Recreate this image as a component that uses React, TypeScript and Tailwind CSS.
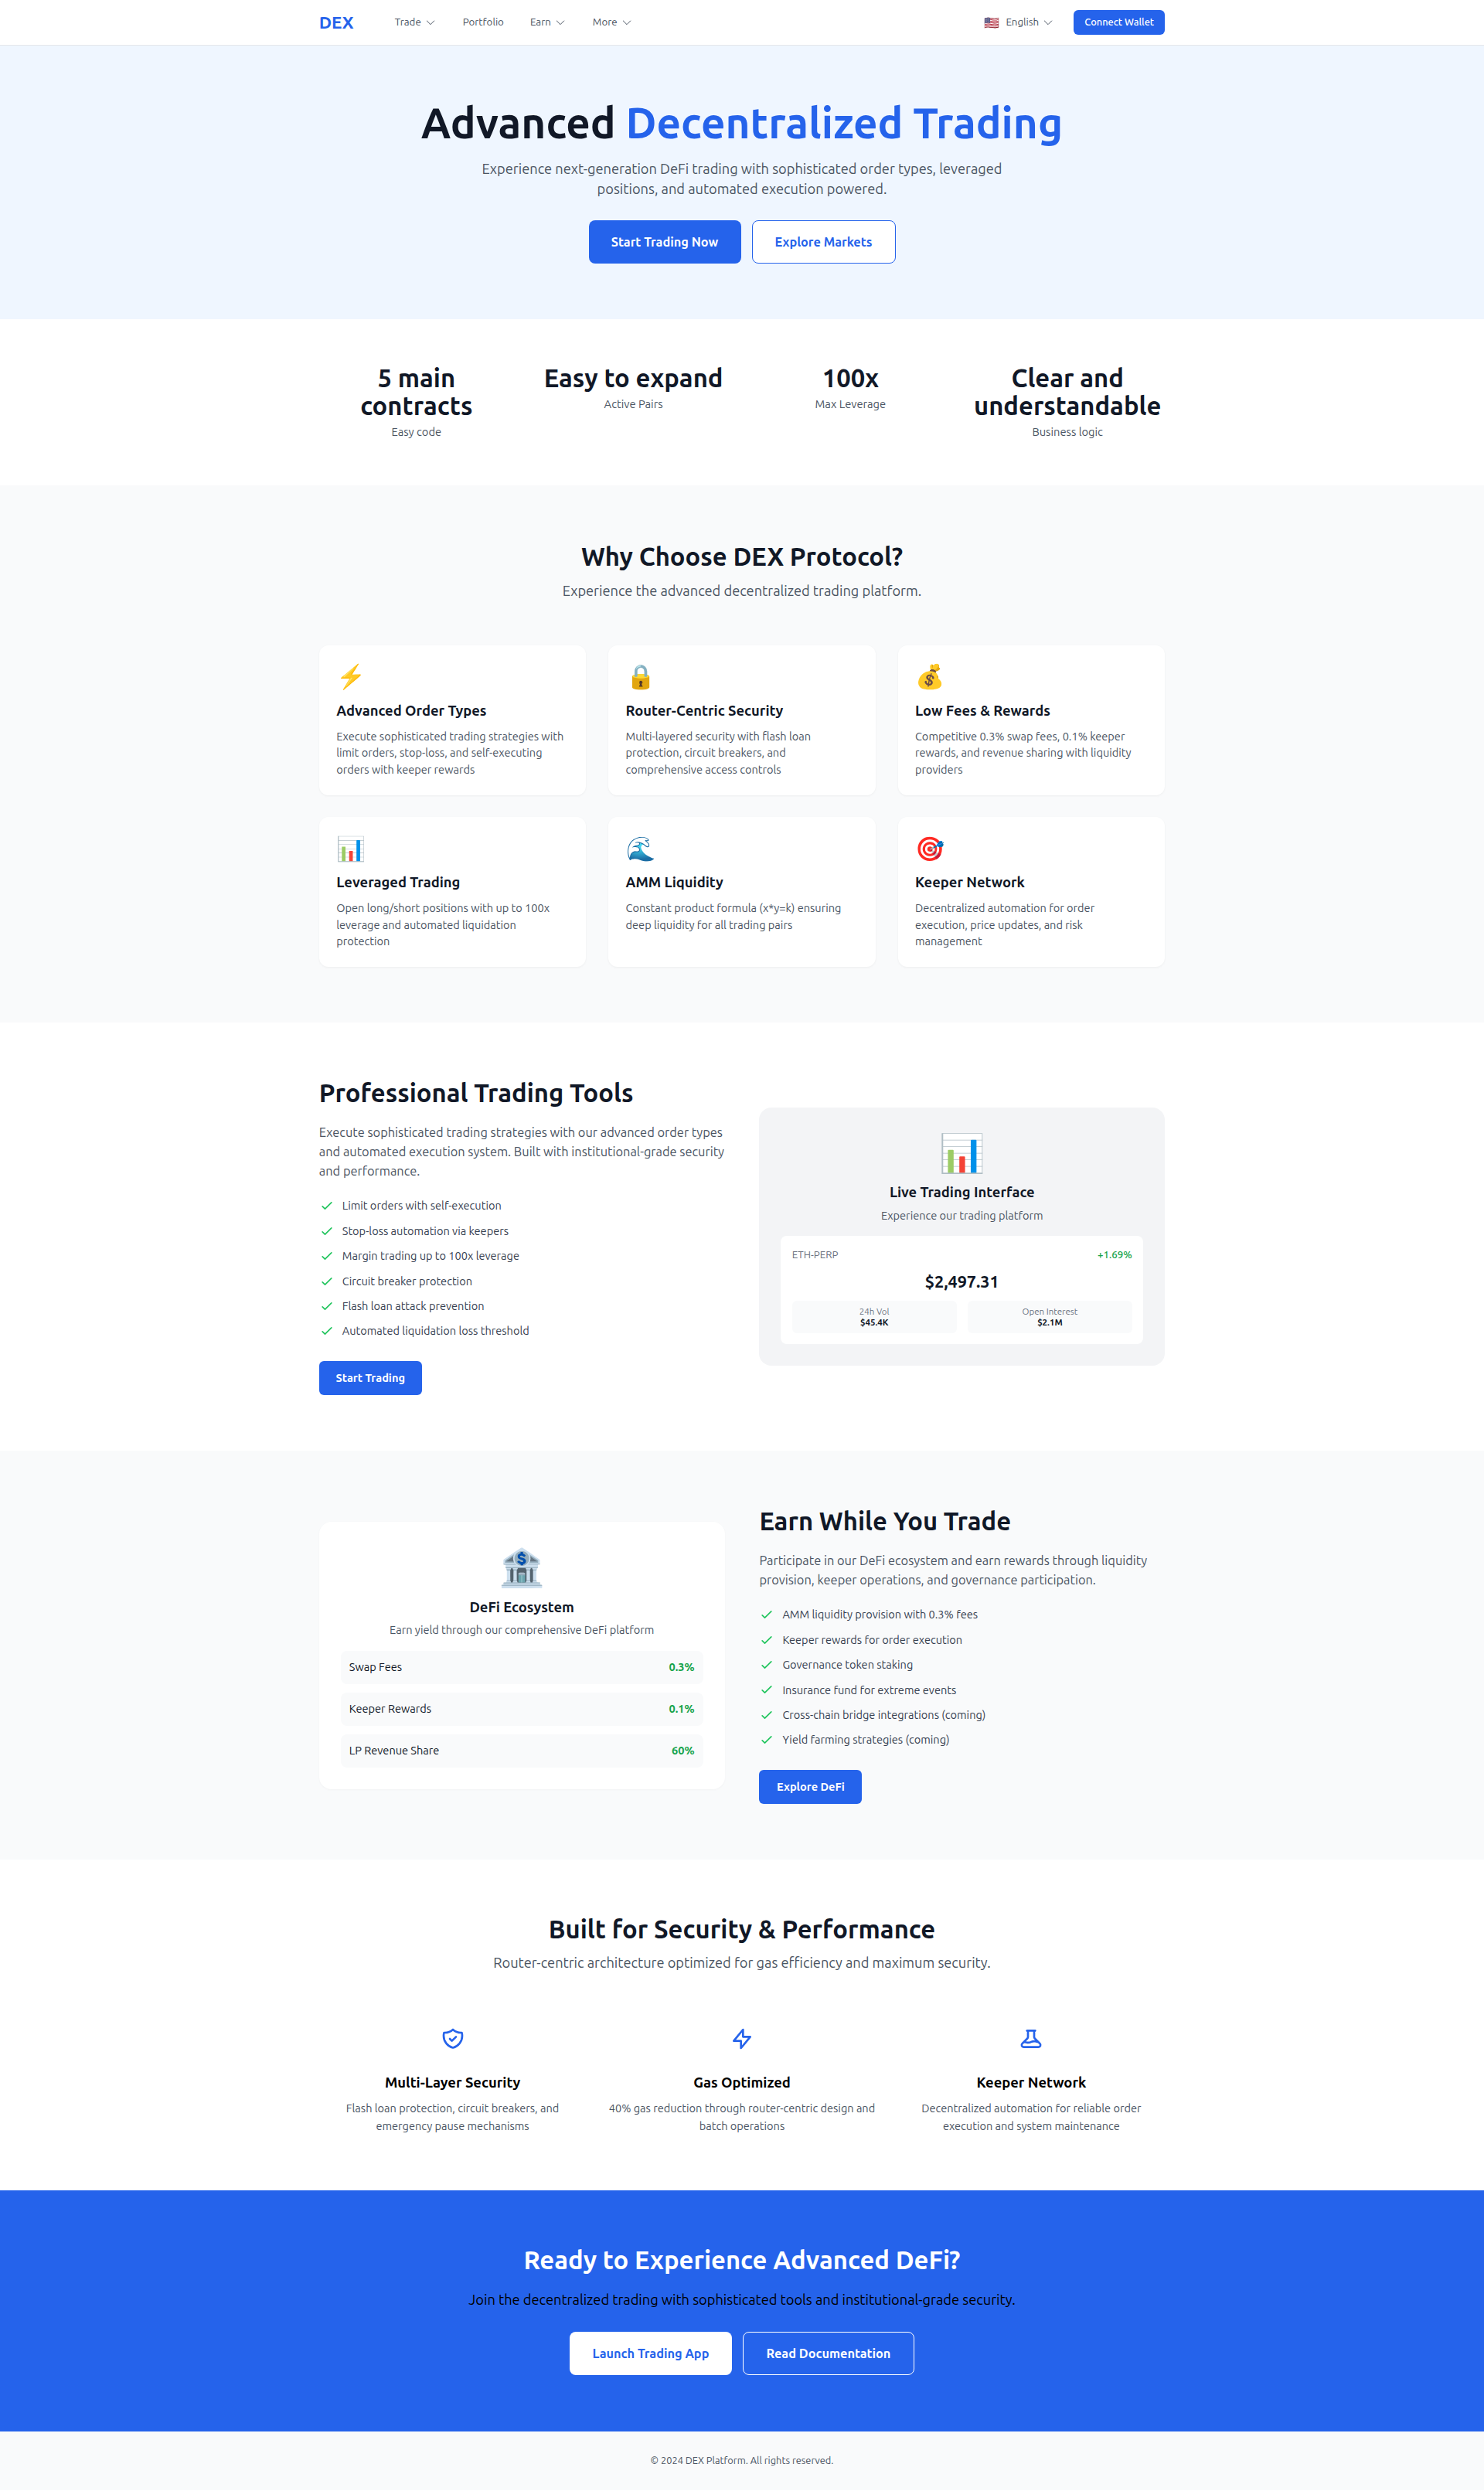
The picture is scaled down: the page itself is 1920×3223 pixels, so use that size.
import { HiOutlineBeaker, HiOutlineCheck, HiOutlineChevronDown, HiOutlineLightningBolt, HiOutlineShieldCheck } from 'react-icons/hi';

const navLinks = [
  { label: 'Trade', caret: true },
  { label: 'Portfolio', caret: false },
  { label: 'Earn', caret: true },
  { label: 'More', caret: true },
];

const stats = [
  { value: '5 main contracts', label: 'Easy code' },
  { value: 'Easy to expand', label: 'Active Pairs' },
  { value: '100x', label: 'Max Leverage' },
  { value: 'Clear and understandable', label: 'Business logic' },
];

const features = [
  { icon: '⚡', title: 'Advanced Order Types', text: 'Execute sophisticated trading strategies with limit orders, stop-loss, and self-executing orders with keeper rewards' },
  { icon: '🔒', title: 'Router-Centric Security', text: 'Multi-layered security with flash loan protection, circuit breakers, and comprehensive access controls' },
  { icon: '💰', title: 'Low Fees & Rewards', text: 'Competitive 0.3% swap fees, 0.1% keeper rewards, and revenue sharing with liquidity providers' },
  { icon: '📊', title: 'Leveraged Trading', text: 'Open long/short positions with up to 100x leverage and automated liquidation protection' },
  { icon: '🌊', title: 'AMM Liquidity', text: 'Constant product formula (x*y=k) ensuring deep liquidity for all trading pairs' },
  { icon: '🎯', title: 'Keeper Network', text: 'Decentralized automation for order execution, price updates, and risk management' },
];

const tools = [
  'Limit orders with self-execution',
  'Stop-loss automation via keepers',
  'Margin trading up to 100x leverage',
  'Circuit breaker protection',
  'Flash loan attack prevention',
  'Automated liquidation loss threshold',
];

const earn = [
  'AMM liquidity provision with 0.3% fees',
  'Keeper rewards for order execution',
  'Governance token staking',
  'Insurance fund for extreme events',
  'Cross-chain bridge integrations (coming)',
  'Yield farming strategies (coming)',
];

const rates = [
  { label: 'Swap Fees', value: '0.3%' },
  { label: 'Keeper Rewards', value: '0.1%' },
  { label: 'LP Revenue Share', value: '60%' },
];

const pillars = [
  { icon: HiOutlineShieldCheck, title: 'Multi-Layer Security', text: 'Flash loan protection, circuit breakers, and emergency pause mechanisms' },
  { icon: HiOutlineLightningBolt, title: 'Gas Optimized', text: '40% gas reduction through router-centric design and batch operations' },
  { icon: HiOutlineBeaker, title: 'Keeper Network', text: 'Decentralized automation for reliable order execution and system maintenance' },
];

function CheckList({ items }: { items: string[] }) {
  return (
    <ul className="flex flex-col gap-[12.4px]">
      {items.map((item) => (
        <li key={item} className="flex items-center gap-[10px] h-5 text-[14.56px] text-[#374151]">
          <HiOutlineCheck className="w-5 h-5 text-[#22c55e] shrink-0" />
          {item}
        </li>
      ))}
    </ul>
  );
}

export default function App() {
  return (
    <div className="min-h-screen bg-white font-[Ubuntu,'Noto_Sans',sans-serif] text-[#111827]">
      <nav className="h-[59px] bg-white border-b border-[#e5e7eb]">
        <div className="w-[1094.4px] h-full mx-auto flex items-center justify-between">
          <div className="flex items-center">
            <span className="text-[22.4px] font-bold text-[#2563eb] w-[98px]">DEX</span>
            <div className="flex items-center gap-[34px] text-[13.3px] text-[#4b5563]">
              {navLinks.map((link) => (
                <span key={link.label} className="flex items-center gap-1">
                  {link.label}
                  {link.caret && <HiOutlineChevronDown className="w-4 h-4" strokeWidth={1.5} />}
                </span>
              ))}
            </div>
          </div>
          <div className="flex items-center gap-[25px]">
            <span className="flex items-center gap-1 text-[13.3px] text-[#4b5563]">
              <span className="text-[16px] leading-none mr-1">🇺🇸</span>
              English
              <HiOutlineChevronDown className="w-4 h-4" strokeWidth={1.5} />
            </span>
            <button className="h-8 w-[118px] rounded-md bg-[#2563eb] text-[12.8px] font-medium text-white">Connect Wallet</button>
          </div>
        </div>
      </nav>

      <section className="bg-[#eff6ff] pt-[70px] pb-[72px] text-center">
        <h1 className="text-[54.8px] leading-[60px] font-bold">
          Advanced <span className="text-[#2563eb]">Decentralized Trading</span>
        </h1>
        <p className="w-[720px] mx-auto mt-[17px] text-[18.24px] leading-[25.6px] text-[#4b5563]">
          Experience next-generation DeFi trading with sophisticated order types, leveraged positions, and automated execution powered.
        </p>
        <div className="flex justify-center gap-[14px] mt-7">
          <button className="h-14 w-[197px] rounded-lg bg-[#2563eb] text-[16.3px] font-semibold text-white">Start Trading Now</button>
          <button className="h-14 w-[186px] rounded-lg border border-[#2563eb] bg-white text-[16.3px] font-semibold text-[#2563eb]">Explore Markets</button>
        </div>
      </section>

      <section className="py-[58px]">
        <div className="w-[1094.4px] mx-auto grid grid-cols-4 gap-[28.8px] text-center">
          {stats.map((stat) => (
            <div key={stat.label} className="px-1">
              <div className="text-[32.8px] leading-[36px] font-bold">{stat.value}</div>
              <div className="mt-[5px] text-[14.7px] leading-[22px] text-[#4b5563]">{stat.label}</div>
            </div>
          ))}
        </div>
      </section>

      <section className="bg-[#f9fafb] py-[72px]">
        <div className="w-[1094.4px] mx-auto">
          <h2 className="text-[32.8px] leading-[40px] font-bold text-center">Why Choose DEX Protocol?</h2>
          <p className="mt-3 text-[18.24px] leading-[25.6px] text-[#4b5563] text-center">Experience the advanced decentralized trading platform.</p>
          <div className="mt-[57px] grid grid-cols-3 gap-[28.8px]">
            {features.map((feature) => (
              <div key={feature.title} className="rounded-xl bg-white p-[22.4px] shadow-[0_1px_3px_rgba(0,0,0,0.05)]">
                <div className="text-[30.7px] leading-[36px]">{feature.icon}</div>
                <h3 className="mt-[12.6px] text-[18.4px] leading-[26px] font-bold">{feature.title}</h3>
                <p className="mt-[10px] text-[14.56px] leading-[21.5px] text-[#4b5563]">{feature.text}</p>
              </div>
            ))}
          </div>
        </div>
      </section>

      <section className="py-[72px]">
        <div className="w-[1094.4px] mx-auto grid grid-cols-2 gap-[44.8px] items-center">
          <div>
            <h2 className="text-[32.8px] leading-[40px] font-bold -mt-px">Professional Trading Tools</h2>
            <p className="mt-[18.5px] text-[16.4px] leading-[25px] text-[#4b5563]">
              Execute sophisticated trading strategies with our advanced order types and automated execution system. Built with institutional-grade security and performance.
            </p>
            <div className="mt-[22.5px]">
              <CheckList items={tools} />
            </div>
            <button className="block mt-[29px] h-11 w-[133px] rounded-md bg-[#2563eb] text-[14.56px] font-semibold text-white">Start Trading</button>
          </div>
          <div className="rounded-2xl bg-[#f3f4f6] p-7 text-center">
            <div className="text-[48px] leading-[60px]">📊</div>
            <h3 className="mt-[8px] text-[18.4px] leading-[26px] font-bold">Live Trading Interface</h3>
            <p className="mt-[7px] text-[14.56px] leading-[22px] text-[#4b5563]">Experience our trading platform</p>
            <div className="mt-[15px] rounded-lg bg-white p-[14.4px]">
              <div className="flex justify-between text-[13.3px] leading-[19px]">
                <span className="text-[#6b7280]">ETH-PERP</span>
                <span className="font-medium text-[#16a34a]">+1.69%</span>
              </div>
              <div className="mt-[9px] text-[21.6px] leading-[32px] font-bold">$2,497.31</div>
              <div className="mt-[9px] grid grid-cols-2 gap-[14.4px]">
                <div className="rounded-md bg-[#f9fafb] py-[7px] text-[11.5px] leading-[14px]">
                  <div className="text-[#6b7280]">24h Vol</div>
                  <div className="font-semibold">$45.4K</div>
                </div>
                <div className="rounded-md bg-[#f9fafb] py-[7px] text-[11.5px] leading-[14px]">
                  <div className="text-[#6b7280]">Open Interest</div>
                  <div className="font-semibold">$2.1M</div>
                </div>
              </div>
            </div>
          </div>
        </div>
      </section>

      <section className="bg-[#f9fafb] py-[72px]">
        <div className="w-[1094.4px] mx-auto grid grid-cols-2 gap-[44.8px] items-center">
          <div className="rounded-2xl bg-white p-7 text-center shadow-[0_1px_3px_rgba(0,0,0,0.03)]">
            <div className="text-[48px] leading-[60px]">🏦</div>
            <h3 className="mt-[9px] text-[18.4px] leading-[26px] font-bold">DeFi Ecosystem</h3>
            <p className="mt-[6px] text-[14.56px] leading-[22px] text-[#4b5563]">Earn yield through our comprehensive DeFi platform</p>
            <div className="mt-[15.5px] flex flex-col gap-[11px]">
              {rates.map((rate) => (
                <div key={rate.label} className="flex h-[43px] items-center justify-between rounded-lg bg-[#f9fafb] px-[11px] text-[14.56px]">
                  <span>{rate.label}</span>
                  <span className="font-semibold text-[#16a34a]">{rate.value}</span>
                </div>
              ))}
            </div>
          </div>
          <div>
            <h2 className="text-[32.8px] leading-[40px] font-bold -mt-px">Earn While You Trade</h2>
            <p className="mt-[18.5px] text-[16.4px] leading-[25px] text-[#4b5563]">
              Participate in our DeFi ecosystem and earn rewards through liquidity provision, keeper operations, and governance participation.
            </p>
            <div className="mt-[22.5px]">
              <CheckList items={earn} />
            </div>
            <button className="block mt-[29px] h-11 w-[133px] rounded-md bg-[#2563eb] text-[14.56px] font-semibold text-white">Explore DeFi</button>
          </div>
        </div>
      </section>

      <section className="pt-[70px] pb-[72px]">
        <div className="w-[1094.4px] mx-auto">
          <h2 className="text-[32.8px] leading-[40px] font-bold text-center">Built for Security &amp; Performance</h2>
          <p className="mt-[11px] text-[18.24px] leading-[25.6px] text-[#4b5563] text-center">Router-centric architecture optimized for gas efficiency and maximum security.</p>
          <div className="mt-[69px] grid grid-cols-3 gap-[28.8px] text-center">
            {pillars.map((pillar) => (
              <div key={pillar.title}>
                <pillar.icon className="w-8 h-8 mx-auto text-[#2563eb]" />
                <h3 className="mt-[27px] text-[18.4px] leading-[26px] font-bold text-black">{pillar.title}</h3>
                <p className="mt-[9.5px] text-[14.56px] leading-[23px] text-[#4b5563]">{pillar.text}</p>
              </div>
            ))}
          </div>
        </div>
      </section>

      <section className="bg-[#2563eb] pt-[70px] pb-[73px] text-center">
        <h2 className="text-[32.8px] leading-[40px] font-bold text-white">Ready to Experience Advanced DeFi?</h2>
        <p className="mt-[19px] text-[18.24px] leading-[25.6px] text-black">Join the decentralized trading with sophisticated tools and institutional-grade security.</p>
        <div className="flex justify-center gap-[14px] mt-[28px]">
          <button className="h-14 w-[210px] rounded-lg bg-white text-[16.3px] font-semibold text-[#2563eb]">Launch Trading App</button>
          <button className="h-14 w-[222px] rounded-lg border border-white text-[16.3px] font-semibold text-white">Read Documentation</button>
        </div>
      </section>

      <footer className="h-[76px] bg-[#f9fafb] flex items-center justify-center text-[12.8px] text-[#4b5563]">
        © 2024 DEX Platform. All rights reserved.
      </footer>
    </div>
  );
}
